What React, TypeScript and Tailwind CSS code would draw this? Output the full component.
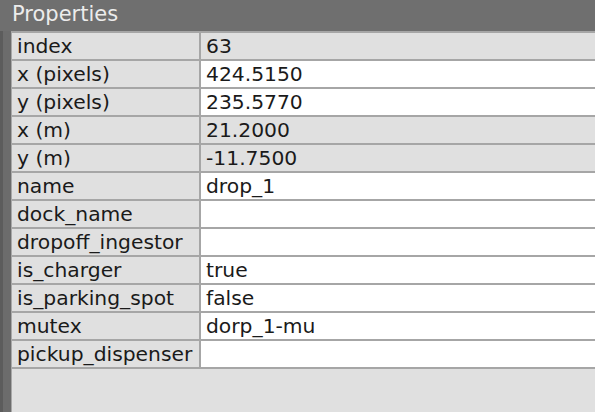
import React from "react";

const rows: { k: string; v: string; ro: boolean }[] = [
  { k: "index", v: "63", ro: true },
  { k: "x (pixels)", v: "424.5150", ro: false },
  { k: "y (pixels)", v: "235.5770", ro: false },
  { k: "x (m)", v: "21.2000", ro: true },
  { k: "y (m)", v: "-11.7500", ro: true },
  { k: "name", v: "drop_1", ro: false },
  { k: "dock_name", v: "", ro: false },
  { k: "dropoff_ingestor", v: "", ro: false },
  { k: "is_charger", v: "true", ro: false },
  { k: "is_parking_spot", v: "false", ro: false },
  { k: "mutex", v: "dorp_1-mu", ro: false },
  { k: "pickup_dispenser", v: "", ro: false },
];

export default function App() {
  return (
    <div
      className="w-[595px] h-[412px] flex flex-col overflow-hidden bg-[#6e6e6e] text-[20.3px] text-[#1a1a1a]"
      style={{ fontFamily: '"DejaVu Sans", sans-serif' }}
    >
      <div className="h-[31px] shrink-0 bg-[#6f6f6f] pl-[12px] leading-[28px] text-[21px] text-[#ececec]">
        Properties
      </div>
      <div className="flex flex-1 min-h-0">
        <div className="w-[3px] bg-[#5c5c5c]" />
        <div className="w-[8px] bg-[#6c6c6c]" />
        <div className="w-[1px] bg-[#a8a8a8]" />
        <div className="flex-1 bg-[#e0e0e0] flex flex-col">
          <div className="border-t-2 border-[#a6a6a6]">
            {rows.map((r) => (
              <div key={r.k} className="flex h-[28px] border-b-2 border-[#a6a6a6]">
                <div className="w-[189px] shrink-0 border-r-2 border-[#a6a6a6] pl-[5px] leading-[27px] whitespace-nowrap overflow-hidden">
                  {r.k}
                </div>
                <div
                  className={
                    "flex-1 pl-[5px] leading-[27px] whitespace-nowrap " +
                    (r.ro ? "bg-[#e0e0e0]" : "bg-white")
                  }
                >
                  {r.v}
                </div>
              </div>
            ))}
          </div>
        </div>
      </div>
    </div>
  );
}
